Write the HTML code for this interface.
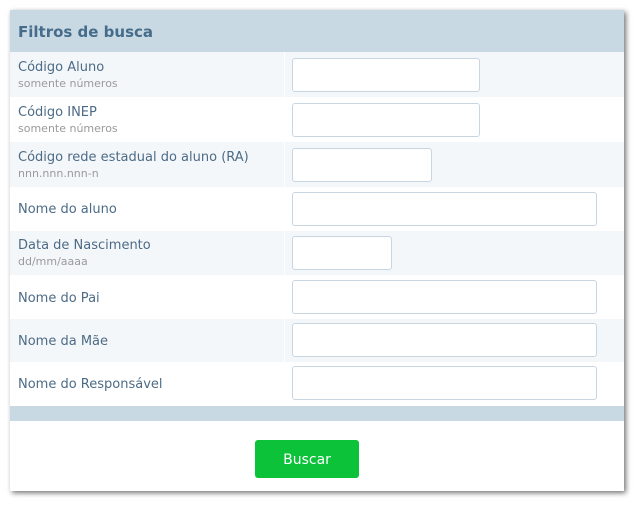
<!DOCTYPE html>
<html><head><style>
body{margin:0;width:639px;height:507px;background:#fff;font-family:"DejaVu Sans","Liberation Sans",sans-serif;position:relative;overflow:hidden}
.panel{position:absolute;left:10px;top:10px;width:614px;height:481px;background:#fff;box-shadow:2px 2px 5px rgba(0,0,0,.55)}
.hd{position:absolute;left:0;top:0;width:614px;height:42px;background:#c9d9e3;color:#456c8b;font-size:15px;line-height:44px;padding-left:8px;box-sizing:border-box;font-weight:bold}
.row{position:absolute;left:0;width:614px}
.row.a{background:#f4f7fa}
.row .l{position:absolute;left:8px;color:#4d6b86;font-size:13px}
.row .s{display:block;color:#9a9a9a;font-size:11px;margin-top:2px}
.row .d{position:absolute;left:274px;top:0;bottom:0;width:1px;background:#fff}
.in{position:absolute;left:282px;height:32px;border:1px solid #c8d6e2;border-radius:3px;background:#fff;box-sizing:border-box}
.bar{position:absolute;left:0;top:396px;width:614px;height:15px;background:#c9d9e3}
.btn{position:absolute;left:245px;top:430px;width:104px;height:38px;background:#0bc239;border-radius:3px;color:#fff;font-size:14px;text-align:center;line-height:40px}
</style></head><body>
<div class="panel">
<div class="hd">Filtros de busca</div>
<div class="row a" style="top:42px;height:45px"><div class="l" style="top:8px">Código Aluno<span class="s">somente números</span></div><div class="d"></div><div class="in" style="top:6px;width:188px;height:34px"></div></div>
<div class="row" style="top:87px;height:45px"><div class="l" style="top:8px">Código INEP<span class="s">somente números</span></div><div class="in" style="top:6px;width:188px;height:34px"></div></div>
<div class="row a" style="top:132px;height:45px"><div class="l" style="top:8px">Código rede estadual do aluno (RA)<span class="s">nnn.nnn.nnn-n</span></div><div class="d"></div><div class="in" style="top:6px;width:140px;height:34px"></div></div>
<div class="row" style="top:177px;height:44px"><div class="l" style="top:15px">Nome do aluno</div><div class="in" style="top:5px;width:305px;height:34px"></div></div>
<div class="row a" style="top:221px;height:44px"><div class="l" style="top:7px">Data de Nascimento<span class="s">dd/mm/aaaa</span></div><div class="d"></div><div class="in" style="top:5px;width:100px;height:34px"></div></div>
<div class="row" style="top:265px;height:44px"><div class="l" style="top:16px">Nome do Pai</div><div class="in" style="top:5px;width:305px;height:34px"></div></div>
<div class="row a" style="top:309px;height:43px"><div class="l" style="top:15px">Nome da Mãe</div><div class="d"></div><div class="in" style="top:4px;width:305px;height:34px"></div></div>
<div class="row" style="top:352px;height:43px"><div class="l" style="top:15px">Nome do Responsável</div><div class="in" style="top:4px;width:305px;height:34px"></div></div>
<div class="bar"></div>
<div class="btn">Buscar</div>
</div>
</body></html>
